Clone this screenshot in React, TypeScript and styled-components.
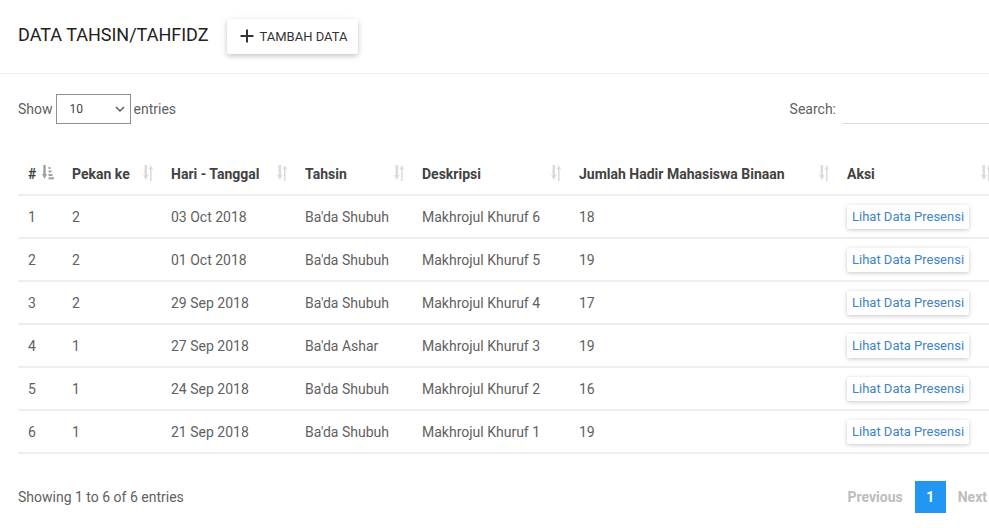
import React from "react";
import styled, { createGlobalStyle } from "styled-components";

const Global = createGlobalStyle`
  html, body { margin: 0; padding: 0; background: #fff; overflow: hidden; }
  body { font-family: Roboto, "Liberation Sans", Arial, sans-serif; }
  * { box-sizing: border-box; }
`;

const Card = styled.div`
  width: 1017px;
  background: #fff;
`;

const CardHeader = styled.div`
  height: 74px;
  display: flex;
  align-items: center;
  padding: 0 18px;
  gap: 18px;
  border-bottom: 1px solid #eeeeee;
`;

const Title = styled.h2`
  margin: 0;
  font-size: 18px;
  font-weight: 400;
  color: #212121;
  margin-top: -5px;
`;

const AddButton = styled.button`
  height: 35px;
  padding: 0 11px 0 13px;
  display: flex;
  align-items: center;
  gap: 6px;
  border: none;
  border-radius: 2px;
  background: #fff;
  box-shadow: 0 2px 5px rgba(0, 0, 0, 0.16), 0 2px 8px rgba(0, 0, 0, 0.08);
  font-family: inherit;
  font-size: 13px;
  color: #333;
  text-transform: uppercase;
  margin-top: -1px;
`;

const Body = styled.div`
  padding: 20px 18px 0 18px;
`;

const Controls = styled.div`
  display: flex;
  justify-content: space-between;
  align-items: center;
  height: 30px;
  font-size: 14px;
  color: #616161;
`;

const Label = styled.label`
  display: flex;
  align-items: center;
  gap: 3px;
`;

const SelectBox = styled.div`
  width: 75px;
  height: 30px;
  border: 1px solid #8f8f8f;
  display: flex;
  align-items: center;
  justify-content: space-between;
  padding: 0 5px 0 13px;
  font-size: 12px;
  color: #444;
`;

const SearchInput = styled.div`
  width: 157px;
  height: 30px;
  border-bottom: 1px solid #ddd;
  margin-left: 3px;
`;

const Table = styled.table`
  margin-top: 29px;
  width: 981px;
  border-collapse: collapse;
  table-layout: fixed;
  font-size: 14px;
`;

const Th = styled.th`
  position: relative;
  text-align: left;
  font-weight: 700;
  color: #424242;
  height: 42px;
  padding: 0 10px;
  border-bottom: 2px solid #eeeeee;
`;

const SortIcon = styled.span`
  position: absolute;
  right: 8px;
  top: 12px;
  display: flex;
`;

const Td = styled.td`
  height: 43px;
  padding: 0 10px;
  color: #616161;
  border-bottom: 2px solid #eeeeee;
  white-space: nowrap;
`;

const ViewButton = styled.button`
  height: 24px;
  padding: 0 5px;
  border: none;
  border-radius: 2px;
  background: #fff;
  color: #4183c4;
  font-family: inherit;
  font-size: 13px;
  box-shadow: 0 1px 4px rgba(0, 0, 0, 0.22);
`;

const Footer = styled.div`
  display: flex;
  justify-content: space-between;
  align-items: center;
  margin-top: 27px;
  font-size: 14px;
  color: #616161;
`;

const Pager = styled.div`
  display: flex;
  align-items: center;
`;

const PageLink = styled.span<{ $active?: boolean }>`
  height: 32px;
  min-width: 31px;
  padding: ${(p) => (p.$active ? "0" : "0 12px")};
  display: flex;
  align-items: center;
  justify-content: center;
  font-weight: 700;
  color: ${(p) => (p.$active ? "#fff" : "#bdbdbd")};
  background: ${(p) => (p.$active ? "#2196f3" : "transparent")};
`;

const SortBoth = () => (
  <svg width="10" height="16" viewBox="0 0 10 16">
    <g fill="#dcdcdc">
      <rect x="1.5" y="0" width="2.6" height="11" />
      <polygon points="0,10 5.6,10 2.8,15" />
      <rect x="7" y="4" width="1.6" height="12" />
      <polygon points="5.6,4.5 10,4.5 7.8,0" />
    </g>
  </svg>
);

const SortAsc = () => (
  <svg width="12" height="15" viewBox="0 0 12 15">
    <g fill="#a0a0a0">
      <rect x="1.3" y="0" width="2.4" height="10" />
      <polygon points="0,9 5,9 2.5,14" />
      <rect x="6.5" y="2" width="2" height="2" />
      <rect x="6.5" y="5.5" width="3" height="2" />
      <rect x="6.5" y="9" width="4" height="2" />
      <rect x="6.5" y="12.3" width="5.5" height="2" />
    </g>
  </svg>
);

const Plus = () => (
  <svg width="14" height="14" viewBox="0 0 14 14">
    <path d="M7 0.5v13M0.5 7h13" stroke="#333" strokeWidth="2" />
  </svg>
);

const Chevron = () => (
  <svg width="10" height="6" viewBox="0 0 10 6">
    <path d="M1 1l4 4 4-4" stroke="#555" strokeWidth="1.4" fill="none" />
  </svg>
);

const columns = [
  { label: "#", width: 44 },
  { label: "Pekan ke", width: 99 },
  { label: "Hari - Tanggal", width: 134 },
  { label: "Tahsin", width: 117 },
  { label: "Deskripsi", width: 157 },
  { label: "Jumlah Hadir Mahasiswa Binaan", width: 268 },
  { label: "Aksi", width: 162 },
];

const rows = [
  ["1", "2", "03 Oct 2018", "Ba'da Shubuh", "Makhrojul Khuruf 6", "18"],
  ["2", "2", "01 Oct 2018", "Ba'da Shubuh", "Makhrojul Khuruf 5", "19"],
  ["3", "2", "29 Sep 2018", "Ba'da Shubuh", "Makhrojul Khuruf 4", "17"],
  ["4", "1", "27 Sep 2018", "Ba'da Ashar", "Makhrojul Khuruf 3", "19"],
  ["5", "1", "24 Sep 2018", "Ba'da Shubuh", "Makhrojul Khuruf 2", "16"],
  ["6", "1", "21 Sep 2018", "Ba'da Shubuh", "Makhrojul Khuruf 1", "19"],
];

export default function App() {
  return (
    <>
      <Global />
      <Card>
        <CardHeader>
          <Title>DATA TAHSIN/TAHFIDZ</Title>
          <AddButton>
            <Plus />
            Tambah Data
          </AddButton>
        </CardHeader>
        <Body>
          <Controls>
            <Label>
              Show
              <SelectBox>
                10
                <Chevron />
              </SelectBox>
              entries
            </Label>
            <Label>
              Search:
              <SearchInput />
            </Label>
          </Controls>
          <Table>
            <colgroup>
              {columns.map((c) => (
                <col key={c.label} style={{ width: c.width }} />
              ))}
            </colgroup>
            <thead>
              <tr>
                {columns.map((c, i) => (
                  <Th key={c.label}>
                    {c.label}
                    <SortIcon>{i === 0 ? <SortAsc /> : <SortBoth />}</SortIcon>
                  </Th>
                ))}
              </tr>
            </thead>
            <tbody>
              {rows.map((r) => (
                <tr key={r[0]}>
                  {r.map((cell, i) => (
                    <Td key={i}>{cell}</Td>
                  ))}
                  <Td>
                    <ViewButton>Lihat Data Presensi</ViewButton>
                  </Td>
                </tr>
              ))}
            </tbody>
          </Table>
          <Footer>
            <span>Showing 1 to 6 of 6 entries</span>
            <Pager>
              <PageLink>Previous</PageLink>
              <PageLink $active>1</PageLink>
              <PageLink>Next</PageLink>
            </Pager>
          </Footer>
        </Body>
      </Card>
    </>
  );
}
